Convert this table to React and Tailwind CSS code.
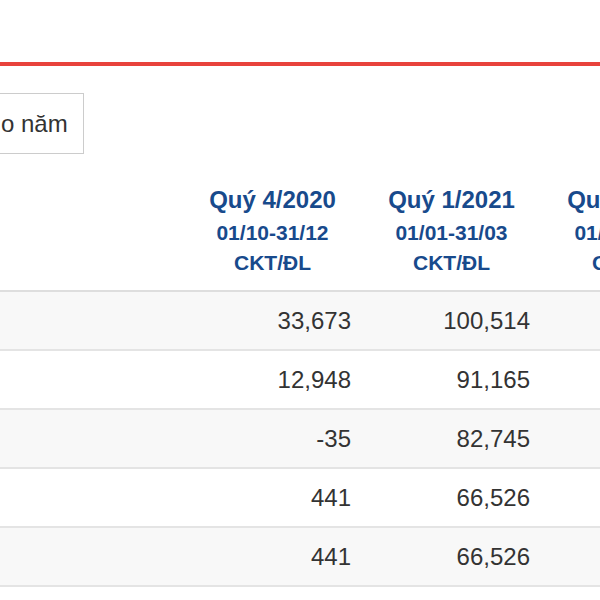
import React from "react";

const cols = [
  { title: "Quý 4/2020", range: "01/10-31/12", note: "CKT/ĐL" },
  { title: "Quý 1/2021", range: "01/01-31/03", note: "CKT/ĐL" },
  { title: "Quý 2/2021", range: "01/04-30/06", note: "CKT/ĐL" },
];

const rows = [
  ["33,673", "100,514", "125,300"],
  ["12,948", "91,165", "110,204"],
  ["-35", "82,745", "96,118"],
  ["441", "66,526", "77,032"],
  ["441", "66,526", "77,032"],
];

export default function App() {
  return (
    <div
      className="w-[600px] h-[600px] overflow-hidden bg-white text-[#333]"
      style={{ fontFamily: '"Liberation Sans", Arial, sans-serif' }}
    >
      <div className="h-[62px]" />
      <div className="h-[4px] bg-[#e8423c]" />

      <div className="pt-[27px]">
        <button className="-ml-[12px] h-[61px] pl-[12px] pr-[15px] border border-[#cccccc] text-[24px] leading-none text-[#333] bg-white">
          o năm
        </button>
      </div>

      <div className="w-[720px] mt-[32px]">
        <div className="grid grid-cols-[183px_179px_179px_179px] border-b-2 border-[#dedede] pb-[12px]">
          <div />
          {cols.map((c) => (
            <div key={c.title} className="text-center font-bold text-[#184a8c]">
              <div className="text-[24px] leading-[28px] mb-[4px]">{c.title}</div>
              <div className="text-[21px] leading-[30px]">{c.range}</div>
              <div className="text-[21px] leading-[30px]">{c.note}</div>
            </div>
          ))}
        </div>

        {rows.map((r, i) => (
          <div
            key={i}
            className={
              "grid grid-cols-[183px_179px_179px_179px] h-[59px] border-b-2 border-[#e4e4e4] items-center text-[24px] " +
              (i % 2 === 0 ? "bg-[#f8f8f8]" : "bg-white")
            }
          >
            <div />
            {r.map((v, j) => (
              <div key={j} className="text-right pr-[11px]">
                {v}
              </div>
            ))}
          </div>
        ))}
      </div>
    </div>
  );
}
